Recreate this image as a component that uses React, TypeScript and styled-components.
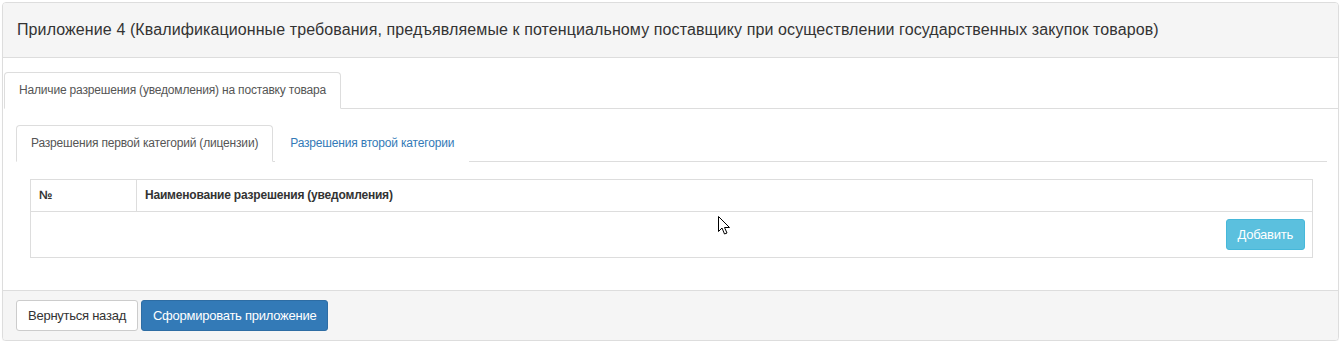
import React from 'react';
import styled, { createGlobalStyle } from 'styled-components';

const GlobalStyle = createGlobalStyle`
  body {
    margin: 0;
    background: #fff;
    font-family: "Liberation Sans", Arial, sans-serif;
    color: #333;
  }
`;

const Page = styled.div`
  padding: 2px 2px 0 2px;
  position: relative;
`;

const Panel = styled.div`
  border: 1px solid #ddd;
  border-radius: 4px;
  background: #fff;
  box-shadow: 0 1px 1px rgba(0, 0, 0, 0.05);
`;

const Heading = styled.div`
  background: #f5f5f5;
  border-bottom: 1px solid #ddd;
  border-radius: 3px 3px 0 0;
  padding: 16px 13px 16px 14px;
  font-size: 16px;
  line-height: 22px;
  letter-spacing: 0.1px;
  color: #333;
`;

const Body = styled.div`
  padding-top: 14px;
`;

const Nav = styled.ul`
  list-style: none;
  margin: 0;
  padding: 0;
  display: flex;
  border-bottom: 1px solid #ddd;
`;

const Tab = styled.li<{ $active?: boolean }>`
  margin-bottom: -1px;
  margin-right: 2px;
  padding: 10px 14px;
  font-size: 12px;
  line-height: 15px;
  letter-spacing: -0.18px;
  border: 1px solid ${(p) => (p.$active ? '#ddd' : 'transparent')};
  border-bottom-color: ${(p) => (p.$active ? '#fff' : 'transparent')};
  border-radius: 4px 4px 0 0;
  background: #fff;
  color: ${(p) => (p.$active ? '#555' : '#337ab7')};
  cursor: pointer;
`;

const OuterTabs = styled.div`
  padding-left: 1px;
`;

const TabPane = styled.div`
  padding: 16px 11px 32px 13px;
`;

const TableWrap = styled.div`
  padding: 17px 14px 0 14px;
`;

const Table = styled.table`
  width: 100%;
  border-collapse: collapse;
  table-layout: fixed;
  font-size: 12px;
  color: #333;
`;

const Th = styled.th<{ $w?: number }>`
  border: 1px solid #ddd;
  text-align: left;
  font-weight: bold;
  padding: 8px 8px;
  line-height: 15px;
  letter-spacing: -0.2px;
  width: ${(p) => (p.$w ? `${p.$w}px` : 'auto')};
`;

const Td = styled.td`
  border: 1px solid #ddd;
  padding: 7px 7px 7px 8px;
  text-align: right;
`;

const Btn = styled.button<{ $kind: 'default' | 'primary' | 'info' }>`
  font-family: "Liberation Sans", Arial, sans-serif;
  font-size: 13px;
  line-height: 17px;
  letter-spacing: -0.25px;
  padding: 6px 11px;
  border-radius: 3px;
  border: 1px solid
    ${(p) => (p.$kind === 'primary' ? '#2e6da4' : p.$kind === 'info' ? '#46b8da' : '#ccc')};
  background: ${(p) => (p.$kind === 'primary' ? '#337ab7' : p.$kind === 'info' ? '#5bc0de' : '#fff')};
  color: ${(p) => (p.$kind === 'default' ? '#333' : '#fff')};
  cursor: pointer;
`;

const Footer = styled.div`
  background: #f5f5f5;
  border-top: 1px solid #ddd;
  border-radius: 0 0 3px 3px;
  padding: 9px 13px 9px 13px;
  display: flex;
  gap: 3px;
`;

const Cursor = styled.svg`
  position: absolute;
  left: 718px;
  top: 216px;
`;

export default function App() {
  return (
    <Page>
      <GlobalStyle />
      <Panel>
        <Heading>
          Приложение 4 (Квалификационные требования, предъявляемые к потенциальному поставщику при осуществлении государственных закупок товаров)
        </Heading>
        <Body>
          <OuterTabs>
            <Nav>
              <Tab $active>Наличие разрешения (уведомления) на поставку товара</Tab>
            </Nav>
          </OuterTabs>
          <TabPane>
            <Nav>
              <Tab $active>Разрешения первой категорий (лицензии)</Tab>
              <Tab>Разрешения второй категории</Tab>
            </Nav>
            <TableWrap>
              <Table>
                <thead>
                  <tr>
                    <Th $w={89}>№</Th>
                    <Th>Наименование разрешения (уведомления)</Th>
                  </tr>
                </thead>
                <tbody>
                  <tr>
                    <Td colSpan={2}>
                      <Btn $kind="info">Добавить</Btn>
                    </Td>
                  </tr>
                </tbody>
              </Table>
            </TableWrap>
          </TabPane>
        </Body>
        <Footer>
          <Btn $kind="default">Вернуться назад</Btn>
          <Btn $kind="primary">Сформировать приложение</Btn>
        </Footer>
      </Panel>
      <Cursor width="13" height="20" viewBox="0 0 13 20">
        <path d="M0.5 0.5 L0.5 15.5 L4 12 L6.5 18 L9 17 L6.5 11.5 L11.5 11.5 Z" fill="#fff" stroke="#000" strokeWidth="1" />
      </Cursor>
    </Page>
  );
}
